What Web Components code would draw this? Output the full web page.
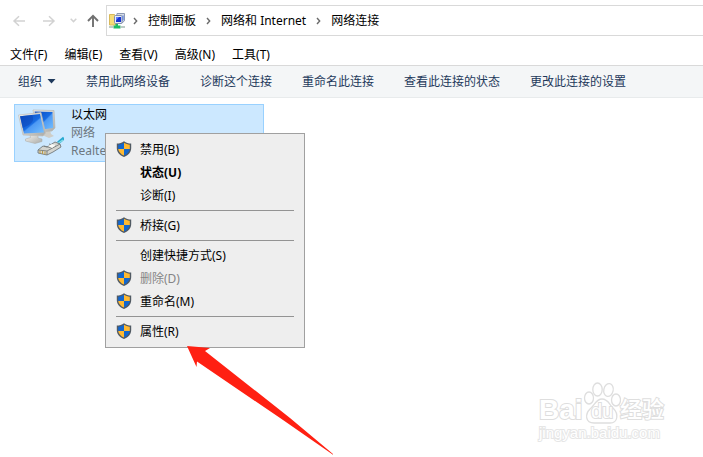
<!DOCTYPE html>
<html lang="zh-CN">
<head>
<meta charset="utf-8">
<title>网络连接</title>
<style>
html, body { height: 100%; }
body { margin: 0; background: #fff; color: #000; font: 12px/18px "Noto Sans", "Noto Sans CJK SC", sans-serif; overflow: hidden; }
</style>
</head>
<body>
<network-window></network-window>
<script>
function define(name, html) {
  const t = document.createElement('template');
  t.innerHTML = html;
  customElements.define(name, class extends HTMLElement {
    constructor() {
      super();
      this.attachShadow({ mode: 'open' }).append(t.content.cloneNode(true));
    }
  });
}

define('shield-icon', `
<style>:host{display:block;width:16px;height:18px} svg{display:block}</style>
<svg width="16" height="16" viewBox="0 0 16 16" aria-hidden="true">
  <path d="M8 .2C6 1.700 3.500 2.500 .8 2.500V7c0 4.200 2.900 7.200 7.200 9 4.300-1.800 7.200-4.800 7.200-9V2.500C12.500 2.500 10 1.700 8 .2z" fill="#515a63"/>
  <path d="M8 1.800C6.200 3 4.200 3.600 2.200 3.700V8H8z" fill="#1267cf"/>
  <path d="M8 1.800c1.800 1.200 3.800 1.800 5.800 1.900V8H8z" fill="#ffb931"/>
  <path d="M2.200 8c.5 2.900 2.500 5.200 5.800 6.600V8z" fill="#ffb931"/>
  <path d="M13.800 8c-.5 2.900-2.500 5.200-5.800 6.600V8z" fill="#1267cf"/>
</svg>`);

define('crumb-arrow', `
<style>:host{display:block;width:5px;height:8px} svg{display:block}</style>
<svg width="5" height="8" viewBox="0 0 5 8" aria-hidden="true"><path d="M1 1l2.700 3L1 7" fill="none" stroke="#6a6a6a" stroke-width="1.400"/></svg>`);

define('crumb-link', `
<style>:host{display:flex;align-items:center;gap:10px} a{color:inherit;text-decoration:none;white-space:nowrap}</style>
<crumb-arrow></crumb-arrow><a href="#"><slot></slot></a>`);

define('nav-bar', `
<style>
:host{display:flex;align-items:center;height:31px;padding-top:5px}
button{border:0;background:none;padding:0;display:block}
svg{display:block}
.nav{display:flex;align-items:center;gap:16px;padding-left:12px;flex:none;width:94px;box-sizing:border-box}
.drop{margin:0 -6px 0 -2px}
.box{flex:1;min-width:0;display:flex;align-items:center;gap:10px;height:29px;border:1px solid #d9d9d9;border-right:0;padding-left:2px;margin-left:12px}
.box svg{flex:none;margin-right:-2px}
</style>
<div class="nav">
  <button aria-label="后退"><svg width="14" height="12" viewBox="0 0 14 12"><path d="M13 6H2M7 1.200L2 6l5 4.800" fill="none" stroke="#d2d2d2" stroke-width="1.500"/></svg></button>
  <button aria-label="前进"><svg width="14" height="12" viewBox="0 0 14 12"><path d="M1 6h11M7 1.200L12 6l-5 4.800" fill="none" stroke="#d2d2d2" stroke-width="1.500"/></svg></button>
  <button class="drop" aria-label="最近位置"><svg width="7" height="5" viewBox="0 0 7 5"><path d="M.7.800l2.800 2.800L6.300.8" fill="none" stroke="#d2d2d2" stroke-width="1.500"/></svg></button>
  <button aria-label="上移"><svg width="12" height="13" viewBox="0 0 12 13"><path d="M6 13V1.800M1 7l5-5.200L11 7" fill="none" stroke="#707070" stroke-width="1.900"/></svg></button>
</div>
<div class="box">
  <svg width="16" height="16" viewBox="0 0 16 16" aria-hidden="true">
    <path d="M.5 1.500h5l1 1.500V12h-6z" fill="#f6dc78" stroke="#d8b95a"/>
    <path d="M8 .5h7.500v7.300L13 10H7z" fill="#d6dce6" stroke="#8d9ab3"/>
    <rect x="5.500" y="2.500" width="7.500" height="8" rx="1" fill="#e8edf6" stroke="#8290aa"/>
    <path d="M7 4h5v5H7z" fill="#1733d4"/><path d="M7 4h3L7 7.500z" fill="#5d7dff"/>
    <path d="M13.500 2.500h1V7l-1 1z" fill="#456ce0"/>
    <path d="M6.500 11h2.500v1.500h2.500v3h-7v-3h2z" fill="#1ebc65"/>
    <path d="M0 14h4.500M11.500 14H16" stroke="#a7bbb4" stroke-width="1.500"/>
  </svg>
  <crumb-link>控制面板</crumb-link>
  <crumb-link>网络和 Internet</crumb-link>
  <crumb-link>网络连接</crumb-link>
</div>`);

define('menu-bar', `
<style>
:host{display:flex;gap:17px;height:29px;align-items:center;padding:8px 10px 0;box-sizing:border-box}
button{font:inherit;color:inherit;border:0;background:none;padding:0;white-space:nowrap}
</style>
<button>文件(F)</button><button>编辑(E)</button><button>查看(V)</button><button>高级(N)</button><button>工具(T)</button>`);

define('command-bar', `
<style>
:host{display:flex;gap:30px;height:31px;align-items:center;padding:0 18px;background:#f4f6f7;border-top:1px solid #d9d9d9;border-bottom:1px solid #e8ebec;color:#1e395b}
button{font:inherit;color:inherit;border:0;background:none;padding:0;white-space:nowrap;display:flex;align-items:center;gap:5px}
</style>
<button>组织 <svg width="9" height="5" viewBox="0 0 9 5" aria-hidden="true"><path d="M.5 0h8l-4 4.500z" fill="#1e395b"/></svg></button>
<button>禁用此网络设备</button><button>诊断这个连接</button><button>重命名此连接</button><button>查看此连接的状态</button><button>更改此连接的设置</button>`);

define('connection-tile', `
<style>
:host{display:flex;gap:7px;width:250px;height:58px;box-sizing:border-box;border:1px solid #99d1ff;background:#cce8ff;padding:1px 0 0 1px}
svg{flex:none}
.t{color:#6d7780}
div{white-space:nowrap}
b{font-weight:400;display:block;color:#000}
</style>
<svg width="48" height="50" viewBox="0 0 48 50" aria-hidden="true">
  <defs>
    <linearGradient id="s" x1="0" y1="0" x2="1" y2="1"><stop offset="0" stop-color="#0646be"/><stop offset=".5" stop-color="#186ce2"/><stop offset=".55" stop-color="#4d99f4"/><stop offset="1" stop-color="#75c0ff"/></linearGradient>
    <linearGradient id="g" x1="0" y1="0" x2="1" y2="1"><stop offset="0" stop-color="#f8f7f2"/><stop offset="1" stop-color="#a9aaa7"/></linearGradient>
  </defs>
  <path d="M28 25l6-1 1 4 3 2-5 2-7-3z" fill="#cecdc7"/>
  <path d="M17 4l21 .5L39 22l-3 3-15 1z" fill="url(#g)" stroke="#b9b8b3" stroke-width=".7"/>
  <path d="M18.500 5.500l18 .5.600 16L22 24z" fill="url(#s)"/>
  <path d="M14 29l8-1v4l4 1v2.500L19 37.500 9.500 35v-2l5-1.500z" fill="url(#g)" stroke="#aaa9a3" stroke-width=".5"/>
  <path d="M2.500 9L25 6.500 29.500 27 27 30 7 29z" fill="url(#g)" stroke="#c0bfba" stroke-width=".7"/>
  <path d="M4 10.200L24 8l4 18.500L8 27.500z" fill="url(#s)"/>
  <path d="M4 10.200L16 9c3 6 0 9-9.500 13z" fill="#0d45b7" opacity=".5"/>
  <path d="M42 37l6-5" stroke="#27a9d1" stroke-width="3"/><path d="M41 38l6-4" stroke="#83dce6" stroke-width="1.500"/>
  <path d="M22 44l5-4 4 1 8-5 5 2 1 3-8 5-6 3-9-2z" fill="#d4d5d0" stroke="#666d70" stroke-width=".8"/>
  <path d="M22 44l9 1v4M31 45l13-7M28 40l8 2M33 38l7 2" fill="none" stroke="#777d7d" stroke-width=".9"/>
  <path d="M24 44.500v3M26.500 45v3M29 45.500v3" stroke="#bb9c45"/>
  <path d="M32 40l4-2 4 1-4 3z" fill="#fafaf6"/>
</svg>
<div><b><slot name="name"></slot></b><div class="t"><slot></slot></div><div class="t"><slot name="device"></slot></div></div>`);

customElements.define('menu-item', class extends HTMLElement {
  constructor() {
    super();
    this.attachShadow({ mode: 'open' }).innerHTML = `
<style>
:host{display:block}
button{font:inherit;color:#000;border:0;background:none;padding:0 8px 0 10px;width:100%;height:23px;display:grid;grid-template-columns:16px 1fr;gap:8px;align-items:center;text-align:left;white-space:nowrap}
button:disabled{color:#858585}
:host([default]) button{font-weight:700}
span{grid-column:2;grid-row:1}
</style>
<button role="menuitem"${this.hasAttribute('disabled') ? ' disabled' : ''}>${this.hasAttribute('shield') ? '<shield-icon></shield-icon>' : ''}<span><slot></slot></span></button>`;
  }
});

define('menu-line', `<style>:host{display:block;height:1px;margin:3px 10px;background:#939393}</style>`);

define('context-menu', `
<style>:host{display:block;width:200px;box-sizing:border-box;border:1px solid #a0a0a0;background:#eee;padding:4px 0}</style>
<slot></slot>`);

define('pointer-arrow', `
<style>:host{display:block} svg{display:block}</style>
<svg width="148" height="110" viewBox="0 0 148 110" aria-hidden="true"><path d="M0 0l23 2-5 3L103 72l43 36v.800L96 74 10 15.500 9.500 21z" fill="#ff2012"/></svg>`);

define('site-mark', `
<style>
:host{display:block;width:126px;color:#fff;font-family:"Liberation Sans","Noto Sans CJK SC",sans-serif}
span,.u{-webkit-text-stroke:2px #dedede;paint-order:stroke fill}
.top{display:grid;grid-template-columns:44px 36px 1fr;align-items:end;line-height:28px;font-size:28px;font-weight:700}
.paw{display:grid;align-items:end;justify-items:center}
.paw>*{grid-area:1/1}
svg{display:block}
.du{font-size:20px;line-height:26px;font-weight:400}
.cn{font-size:22px;font-weight:500;padding-left:1px}
.u{font-size:15px;line-height:18px;-webkit-text-stroke:2px #e6e6e6}
</style>
<div class="top"><span>Bai</span>
<div class="paw"><svg width="38" height="42" viewBox="0 0 38 42" aria-hidden="true"><g fill="#fff" stroke="#dedede" stroke-width="1.300"><ellipse cx="6" cy="16" rx="4.500" ry="6"/><ellipse cx="14.500" cy="7.500" rx="4.700" ry="6.500"/><ellipse cx="25.500" cy="8" rx="4.700" ry="6.500" transform="rotate(12 25.500 8)"/><ellipse cx="33" cy="18" rx="4.500" ry="6"/><path d="M19 17c6 0 7 5 11 9 6 6 5 15-3 15H11c-9 0-9-9-4-14 5-4 6-10 12-10z"/></g></svg><span class="du">du</span></div>
<span class="cn">经验</span></div>
<div class="u">jingyan.baidu.com</div>`);

define('network-window', `
<style>
:host{display:flex;flex-direction:column;position:relative;min-height:100%;box-sizing:border-box}
main{flex:1;padding:6px 14px}
context-menu{position:absolute;left:105px;top:133px}
pointer-arrow{position:absolute;left:187px;top:346px}
site-mark{position:absolute;right:38px;bottom:15px}
</style>
<nav-bar></nav-bar><menu-bar></menu-bar><command-bar></command-bar>
<main><connection-tile><span slot="name">以太网</span>网络<span slot="device">Realtek</span></connection-tile></main>
<context-menu role="menu">
  <menu-item shield>禁用(B)</menu-item>
  <menu-item default>状态(U)</menu-item>
  <menu-item>诊断(I)</menu-item>
  <menu-line></menu-line>
  <menu-item shield>桥接(G)</menu-item>
  <menu-line></menu-line>
  <menu-item>创建快捷方式(S)</menu-item>
  <menu-item shield disabled>删除(D)</menu-item>
  <menu-item shield>重命名(M)</menu-item>
  <menu-line></menu-line>
  <menu-item shield>属性(R)</menu-item>
</context-menu>
<pointer-arrow></pointer-arrow>
<site-mark></site-mark>`);
</script>
</body>
</html>
